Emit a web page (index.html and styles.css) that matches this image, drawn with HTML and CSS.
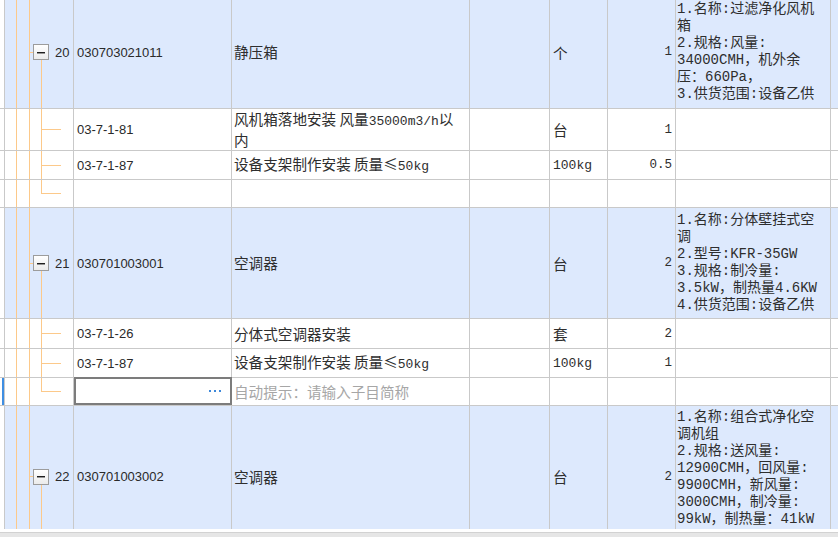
FILE: index.html
```html
<!DOCTYPE html>
<html lang="zh-CN">
<head>
<meta charset="utf-8">
<title>清单</title>
<link rel="stylesheet" href="styles.css">
</head>
<body>
<div class="viewport">
<div class="grid">
  <div class="row parent h113">
    <div class="c0"></div>
    <div class="tree tparent"><span class="tbox"><span class="minus"></span></span><span class="num">20</span></div>
    <div class="code">030703021011</div>
    <div class="name"><span>静压箱</span></div>
    <div class="blank"></div>
    <div class="unit">个</div>
    <div class="qty">1</div>
    <div class="desc"><span>1.名称:过滤净化风机</span><span>箱</span><span>2.规格:风量:</span><span>34000CMH，机外余</span><span>压：660Pa，</span><span>3.供货范围:设备乙供</span></div>
    <div class="rest"></div>
  </div>

  <div class="row h42">
    <div class="c0"></div>
    <div class="tree tchild"></div>
    <div class="code">03-7-1-81</div>
    <div class="name"><span>风机箱落地安装 风量<span class="mono">35000m3/h</span>以</span><span>内</span></div>
    <div class="blank"></div>
    <div class="unit">台</div>
    <div class="qty">1</div>
    <div class="desc"></div>
    <div class="rest"></div>
  </div>

  <div class="row h29">
    <div class="c0"></div>
    <div class="tree tchild"></div>
    <div class="code">03-7-1-87</div>
    <div class="name"><span>设备支架制作安装 质量≤<span class="mono">50kg</span></span></div>
    <div class="blank"></div>
    <div class="unit"><span class="mono">100kg</span></div>
    <div class="qty">0.5</div>
    <div class="desc"></div>
    <div class="rest"></div>
  </div>

  <div class="row h28">
    <div class="c0"></div>
    <div class="tree tlast"></div>
    <div class="code"></div>
    <div class="name"></div>
    <div class="blank"></div>
    <div class="unit"></div>
    <div class="qty"></div>
    <div class="desc"></div>
    <div class="rest"></div>
  </div>

  <div class="row parent h111">
    <div class="c0"></div>
    <div class="tree tparent"><span class="tbox"><span class="minus"></span></span><span class="num">21</span></div>
    <div class="code">030701003001</div>
    <div class="name"><span>空调器</span></div>
    <div class="blank"></div>
    <div class="unit">台</div>
    <div class="qty">2</div>
    <div class="desc"><span>1.名称:分体壁挂式空</span><span>调</span><span>2.型号:KFR-35GW</span><span>3.规格:制冷量:</span><span>3.5kW，制热量4.6KW</span><span>4.供货范围:设备乙供</span></div>
    <div class="rest"></div>
  </div>

  <div class="row h30">
    <div class="c0"></div>
    <div class="tree tchild"></div>
    <div class="code">03-7-1-26</div>
    <div class="name"><span>分体式空调器安装</span></div>
    <div class="blank"></div>
    <div class="unit">套</div>
    <div class="qty">2</div>
    <div class="desc"></div>
    <div class="rest"></div>
  </div>

  <div class="row h29">
    <div class="c0"></div>
    <div class="tree tchild"></div>
    <div class="code">03-7-1-87</div>
    <div class="name"><span>设备支架制作安装 质量≤<span class="mono">50kg</span></span></div>
    <div class="blank"></div>
    <div class="unit"><span class="mono">100kg</span></div>
    <div class="qty">1</div>
    <div class="desc"></div>
    <div class="rest"></div>
  </div>

  <div class="row h28 sel">
    <div class="c0"></div>
    <div class="tree tlast"></div>
    <div class="code editcell">
      <div class="editbox">
        <svg class="dots" width="12" height="2" viewBox="0 0 12 2"><rect x="0" y="0" width="2" height="2" fill="#3d88da"/><rect x="5" y="0" width="2" height="2" fill="#3d88da"/><rect x="10" y="0" width="2" height="2" fill="#3d88da"/></svg>
      </div>
    </div>
    <div class="name hint"><span>自动提示：请输入子目简称</span></div>
    <div class="blank"></div>
    <div class="unit"></div>
    <div class="qty"></div>
    <div class="desc"></div>
    <div class="rest"></div>
  </div>

  <div class="row parent h142">
    <div class="c0"></div>
    <div class="tree tparent"><span class="tbox"><span class="minus"></span></span><span class="num">22</span></div>
    <div class="code">030701003002</div>
    <div class="name"><span>空调器</span></div>
    <div class="blank"></div>
    <div class="unit">台</div>
    <div class="qty">2</div>
    <div class="desc desctop"><span>1.名称:组合式净化空</span><span>调机组</span><span>2.规格:送风量:</span><span>12900CMH，回风量:</span><span>9900CMH，新风量:</span><span>3000CMH，制冷量:</span><span>99kW，制热量：41kW</span></div>
    <div class="rest"></div>
  </div>
</div>
</div>
<div class="hscroll"></div>
</body>
</html>
```

FILE: styles.css
```css
* {
  box-sizing: border-box;
  margin: 0;
  padding: 0;
}

html, body {
  background: #ffffff;
}

body {
  width: 838px;
  height: 537px;
  overflow: hidden;
  font-family: "Liberation Sans", "Noto Sans CJK SC", sans-serif;
  color: #2e2e2e;
}

.viewport {
  height: 529px;
  overflow: hidden;
}

.grid {
  display: flex;
  flex-direction: column;
  margin-top: -4px;
}

.row {
  display: grid;
  grid-template-columns: 5px 69px 158px 238px 80px 58px 68px 155px 1fr;
  flex: none;
}

.h113 { height: 113px; }
.h42 { height: 42px; }
.h30 { height: 30px; }
.h29 { height: 29px; }
.h28 { height: 28px; }
.h111 { height: 111px; }
.h142 { height: 142px; }

.row > div {
  border-right: 1px solid #c9c9c9;
  border-bottom: 1px solid #c9c9c9;
  display: flex;
  align-items: center;
  min-width: 0;
  overflow: hidden;
  white-space: nowrap;
}

.parent > div {
  background-color: #dde9fd;
}

.row > .c0 {
  background-color: #ffffff;
}

.sel > .c0 {
  background-image: linear-gradient(#3f8ee2, #3f8ee2);
  background-size: 2px 100%;
  background-position: right 0;
  background-repeat: no-repeat;
}

.row > .rest {
  border-right: none;
}

/* tree column */
.tree {
  --o: #fcc98a;
  background-image:
    linear-gradient(var(--o), var(--o)),
    linear-gradient(var(--o), var(--o)),
    linear-gradient(var(--o), var(--o)),
    linear-gradient(var(--o), var(--o));
  background-repeat: no-repeat;
}

.tparent {
  padding-left: 28px;
  background-size: 1px 100%, 1px 100%, 4px 1px, 1px 50%;
  background-position: 11px 0, 24px 0, 24px 50%, 36px 100%;
}

.tchild {
  background-size: 1px 100%, 1px 100%, 1px 100%, 20px 1px;
  background-position: 11px 0, 24px 0, 36px 0, 36px 50%;
}

.tlast {
  background-size: 1px 100%, 1px 100%, 1px 50%, 20px 1px;
  background-position: 11px 0, 24px 0, 36px 0, 36px 50%;
}

.tbox {
  width: 16px;
  height: 16px;
  border: 1px solid #9c9c9c;
  background: linear-gradient(#ffffff, #ebebeb);
  display: flex;
  align-items: center;
  justify-content: center;
  margin-right: 6px;
  flex: none;
}

.minus {
  width: 8px;
  height: 1px;
  background: #1e1e1e;
  box-shadow: 0 1px 0 rgba(30, 30, 30, 0.45);
}

.num {
  font-size: 13px;
  color: #2a2a2a;
}

/* code column */
.code {
  padding-left: 3px;
  font-size: 13px;
  color: #2a2a2a;
}

.editcell {
  position: relative;
  overflow: visible !important;
}

.editbox {
  position: absolute;
  left: 0;
  top: -1px;
  right: -1px;
  bottom: 0;
  border: 2px solid #7c7c7c;
  background: #ffffff;
  display: flex;
  align-items: center;
  justify-content: flex-end;
  padding-right: 9px;
}

.dots {
  display: block;
}

/* name column */
.name {
  flex-direction: column;
  align-items: flex-start !important;
  justify-content: center;
  padding-left: 2px;
  font-family: "Noto Sans CJK SC", sans-serif;
  font-size: 14.6px;
  line-height: 18px;
  color: #2e2e2e;
}

.hint {
  color: #a6a6a6;
}

.mono {
  font-family: "Liberation Mono", "Noto Sans CJK SC", monospace;
  font-size: 13px;
}

/* unit column */
.unit {
  padding-left: 3px;
  font-family: "Noto Sans CJK SC", sans-serif;
  font-size: 14.6px;
}

/* quantity column */
.qty {
  justify-content: flex-end;
  padding-right: 3px;
  font-family: "Liberation Mono", monospace;
  font-size: 12.5px;
}

/* description column */
.desc {
  flex-direction: column;
  align-items: flex-start !important;
  justify-content: center;
  padding-left: 1px;
  font-family: "Liberation Mono", "Noto Sans CJK SC", monospace;
  font-size: 14px;
  line-height: 17px;
  color: #2e2e2e;
}

.desctop {
  justify-content: flex-start;
  padding-top: 3px;
}

.hscroll {
  margin-top: 3px;
  height: 8px;
  background: #e6e6e6;
  border-top: 1px solid #d2d2d2;
}
```
